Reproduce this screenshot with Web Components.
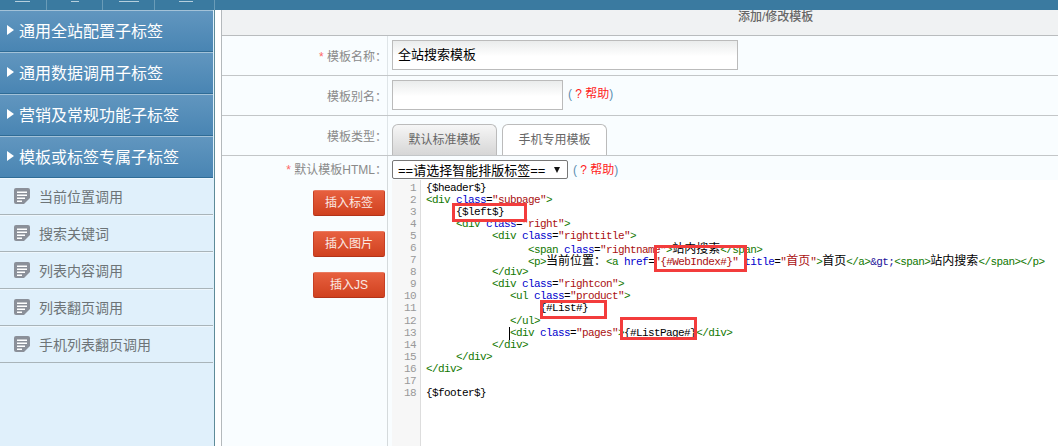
<!DOCTYPE html>
<html lang="zh">
<head>
<meta charset="utf-8">
<title>添加/修改模板</title>
<style>
  html, body { margin: 0; height: 100%; overflow: hidden; background: #fff; }
  body { font-family: "Liberation Sans", "Noto Sans CJK SC", sans-serif; }
</style>
</head>
<body>
<admin-page>
  <top-bar slot="top"></top-bar>
  <side-nav slot="side">
    <nav-head>通用全站配置子标签</nav-head>
    <nav-head>通用数据调用子标签</nav-head>
    <nav-head>营销及常规功能子标签</nav-head>
    <nav-head>模板或标签专属子标签</nav-head>
    <nav-item>当前位置调用</nav-item>
    <nav-item>搜索关键词</nav-item>
    <nav-item>列表内容调用</nav-item>
    <nav-item>列表翻页调用</nav-item>
    <nav-item>手机列表翻页调用</nav-item>
  </side-nav>
  <panel-title>添加/修改模板</panel-title>
  <form-row required label="模板名称：">
    <text-field width="346">全站搜索模板</text-field>
  </form-row>
  <form-row label="模板别名：">
    <text-field width="171"></text-field>
    <help-link></help-link>
  </form-row>
  <form-row label="模板类型：">
    <tab-strip>
      <tab-button>默认标准模板</tab-button>
      <tab-button active>手机专用模板</tab-button>
    </tab-strip>
  </form-row>
  <editor-row>
    <red-button slot="actions">插入标签</red-button>
    <red-button slot="actions">插入图片</red-button>
    <red-button slot="actions">插入JS</red-button>
    <fake-select slot="tools">==请选择智能排版标签==</fake-select>
    <help-link slot="tools"></help-link>
    <code-editor slot="editor">
      <red-mark x="60" y="23" w="75" h="19"></red-mark>
      <red-mark x="262" y="65" w="93" h="27"></red-mark>
      <red-mark x="148" y="120" w="67" h="19"></red-mark>
      <red-mark x="228" y="137" w="77" h="23"></red-mark>
    </code-editor>
  </editor-row>
</admin-page>

<script>
class AdminPage extends HTMLElement {
  constructor() {
    super();
    this.attachShadow({ mode: "open" });
    this.shadowRoot.innerHTML = `
      <style>
        :host { display: flex; flex-direction: column; height: 446px; overflow: hidden; }
        .body { flex: 1; display: flex; min-height: 0; }
        .main {
          flex: 1;
          margin-left: 6px;
          border-left: 1px solid #b4b9bc;
          display: flex;
          flex-direction: column;
          min-width: 0;
        }
      </style>
      <slot name="top"></slot>
      <div class="body">
        <slot name="side"></slot>
        <div class="main"><slot></slot></div>
      </div>`;
  }
}

class TopBar extends HTMLElement {
  constructor() {
    super();
    this.attachShadow({ mode: "open" });
    const cells = [
      [46, 15, 15],
      [55, 24, 8],
      [51, 16, 20],
      [59, 24, 14],
    ];
    this.shadowRoot.innerHTML = `
      <style>
        :host { display: flex; height: 10px; background: #3a7aa0; overflow: hidden; }
        .cell { position: relative; box-sizing: content-box; border-right: 1px solid #6a9cb8; height: 10px; }
        .cell i { display: block; height: 1px; margin-top: 1px; background: #b5cfdd; }
      </style>
      ${cells
        .map(
          ([w, left, len]) =>
            `<div class="cell" style="width:${w}px"><i style="margin-left:${left}px;width:${len}px"></i></div>`
        )
        .join("")}`;
  }
}

class SideNav extends HTMLElement {
  constructor() {
    super();
    this.attachShadow({ mode: "open" });
    this.shadowRoot.innerHTML = `
      <style>
        :host {
          display: flex;
          flex-direction: column;
          box-sizing: border-box;
          width: 215px;
          flex: none;
          background: #e0f0fb;
          border-right: 1px solid #5e8b98;
          padding-right: 1px;
        }
      </style>
      <slot></slot>`;
  }
}

class NavHead extends HTMLElement {
  constructor() {
    super();
    this.attachShadow({ mode: "open" });
    this.shadowRoot.innerHTML = `
      <style>
        :host {
          display: flex;
          align-items: center;
          box-sizing: border-box;
          height: 42px;
          padding: 0 0 2px 7px;
          color: #fff;
          font-size: 16px;
          background: linear-gradient(#6196bf, #4985b3);
          border-top: 1px solid #a3c2d8;
          border-bottom: 1px solid #2f6c96;
        }
        .arrow {
          width: 0;
          height: 0;
          margin: 0 5px 0 0;
          border-left: 7px solid #fff;
          border-top: 5.5px solid transparent;
          border-bottom: 5.5px solid transparent;
        }
      </style>
      <span class="arrow"></span><slot></slot>`;
  }
}

class NavItem extends HTMLElement {
  constructor() {
    super();
    this.attachShadow({ mode: "open" });
    this.shadowRoot.innerHTML = `
      <style>
        :host {
          display: flex;
          align-items: center;
          gap: 9px;
          box-sizing: border-box;
          height: 37px;
          padding-left: 14px;
          color: #6d7477;
          font-size: 14px;
          border-bottom: 1px solid #a9b4b9;
          box-shadow: inset 0 1px 0 #eef7fd;
        }
        svg { flex: none; display: block; }
      </style>
      <svg width="16" height="16" viewBox="0 0 16 16">
        <path fill="#8b9099" d="M2 0H14a2 2 0 0 1 2 2V10L10 16H2a2 2 0 0 1-2-2V2a2 2 0 0 1 2-2z"/>
        <path fill="#fff" d="M3 3.5H13V5H3zM3 6.5H13V8H3zM3 9.5H11V11H3zM3 12.5H8V14H3z"/>
        <path fill="#e0f0fb" d="M16 11.5V16H11z"/>
      </svg>
      <slot></slot>`;
  }
}

class PanelTitle extends HTMLElement {
  constructor() {
    super();
    this.attachShadow({ mode: "open" });
    this.shadowRoot.innerHTML = `
      <style>
        :host {
          display: block;
          box-sizing: border-box;
          height: 26px;
          padding-left: 516px;
          background: #f0f2f3;
          border-bottom: 1px solid #b9bcbe;
          color: #666;
          font-size: 12px;
          font-weight: 500;
          line-height: 15px;
        }
      </style>
      <slot></slot>`;
  }
}

class FormRow extends HTMLElement {
  constructor() {
    super();
    this.attachShadow({ mode: "open" });
  }

  connectedCallback() {
    const star = this.hasAttribute("required") ? '<b>*</b> ' : "";
    this.shadowRoot.innerHTML = `
      <style>
        :host {
          display: flex;
          box-sizing: border-box;
          height: 40px;
          background: #f9fdff;
          border-bottom: 1px solid #c3c6c8;
        }
        .label {
          box-sizing: content-box;
          width: 165px;
          flex: none;
          text-align: right;
          color: #8a8a8a;
          font-size: 12px;
          line-height: 42px;
          border-right: 1px solid #dfe5e8;
        }
        b { color: #f66; font-weight: 400; }
        .value { flex: 1; display: flex; align-items: flex-start; padding-left: 4px; }
      </style>
      <div class="label">${star}${this.getAttribute("label")}</div>
      <div class="value"><slot></slot></div>`;
  }
}

class TextField extends HTMLElement {
  constructor() {
    super();
    this.attachShadow({ mode: "open" });
  }

  connectedCallback() {
    this.shadowRoot.innerHTML = `
      <style>
        :host {
          display: block;
          box-sizing: border-box;
          width: ${this.getAttribute("width")}px;
          height: 30px;
          margin-top: 4px;
          padding-left: 5px;
          border: 1px solid #bbb;
          background: linear-gradient(#eaecec, #fff 55%);
          color: #000;
          font-size: 13px;
          line-height: 28px;
        }
      </style>
      <slot></slot>`;
  }
}

class HelpLink extends HTMLElement {
  constructor() {
    super();
    this.attachShadow({ mode: "open" });
    this.shadowRoot.innerHTML = `
      <style>
        :host {
          display: block;
          margin: 11px 0 0 5px;
          color: #5b8fb0;
          font-size: 12px;
          line-height: 14px;
          white-space: nowrap;
        }
        :host([slot="tools"]) { margin-top: 7px; }
        span { color: #f22; }
      </style>
      ( <span>? 帮助</span>)`;
  }
}

class TabStrip extends HTMLElement {
  constructor() {
    super();
    this.attachShadow({ mode: "open" });
    this.shadowRoot.innerHTML = `
      <style>
        :host { display: flex; gap: 5px; align-self: flex-end; }
      </style>
      <slot></slot>`;
  }
}

class TabButton extends HTMLElement {
  constructor() {
    super();
    this.attachShadow({ mode: "open" });
    this.shadowRoot.innerHTML = `
      <style>
        :host {
          display: block;
          box-sizing: border-box;
          width: 105px;
          height: 31px;
          text-align: center;
          color: #666;
          font-size: 12px;
          line-height: 30px;
          border: 1px solid #bbb;
          border-bottom: 0;
          border-radius: 6px 6px 0 0;
          background: linear-gradient(#f6f6f6, #d6d6d6);
        }
        :host([active]) { background: #fff; }
      </style>
      <slot></slot>`;
  }
}

class EditorRow extends HTMLElement {
  constructor() {
    super();
    this.attachShadow({ mode: "open" });
    this.shadowRoot.innerHTML = `
      <style>
        :host {
          flex: 1;
          display: flex;
          min-height: 0;
          background: #f9fdff;
        }
        .left {
          box-sizing: content-box;
          width: 165px;
          flex: none;
          border-right: 1px solid #d5dadc;
        }
        .label {
          text-align: right;
          color: #8a8a8a;
          font-size: 12px;
          line-height: 29px;
          margin-bottom: 5px;
        }
        b { color: #f66; font-weight: 400; }
        .actions { display: flex; flex-direction: column; gap: 15px; padding-left: 91px; }
        .right { flex: 1; display: flex; flex-direction: column; min-width: 0; }
        .tools { display: flex; height: 24px; padding: 0 0 0 4px; }
      </style>
      <div class="left">
        <div class="label"><b>*</b> 默认模板HTML：</div>
        <div class="actions"><slot name="actions"></slot></div>
      </div>
      <div class="right">
        <div class="tools"><slot name="tools"></slot></div>
        <slot name="editor"></slot>
      </div>`;
  }
}

class RedButton extends HTMLElement {
  constructor() {
    super();
    this.attachShadow({ mode: "open" });
    this.shadowRoot.innerHTML = `
      <style>
        :host {
          display: block;
          box-sizing: border-box;
          width: 72px;
          height: 26px;
          text-align: center;
          color: #fbe9e4;
          font-size: 12px;
          line-height: 25px;
          border: 1px solid #c63f24;
          border-top-color: #ea7a5f;
          border-bottom-color: #b23319;
          border-radius: 2px;
          background: linear-gradient(#e7603f, #d0411f);
        }
      </style>
      <slot></slot>`;
  }
}

class FakeSelect extends HTMLElement {
  constructor() {
    super();
    this.attachShadow({ mode: "open" });
    this.shadowRoot.innerHTML = `
      <style>
        :host {
          display: flex;
          align-items: center;
          box-sizing: border-box;
          width: 176px;
          height: 19px;
          margin-top: 4px;
          padding: 0 7px 0 5px;
          background: #fff;
          border: 1px solid #777;
          border-radius: 2px;
          color: #000;
          font-size: 13px;
          white-space: nowrap;
        }
        .arrow {
          margin-left: auto;
          width: 0;
          height: 0;
          border-top: 6px solid #111;
          border-left: 3px solid transparent;
          border-right: 3px solid transparent;
        }
      </style>
      <slot></slot><span class="arrow"></span>`;
  }
}

const CODE_LINES = [
  '{$header$}',
  '<div class="subpage">',
  '     {$left$}',
  '     <div class="right">',
  '           <div class="righttitle">',
  '                 <span class="rightname">站内搜索</span>',
  '                 <p>当前位置：<a href="{#WebIndex#}" title="首页">首页</a>&gt;<span>站内搜索</span></p>',
  '           </div>',
  '           <div class="rightcon">',
  '              <ul class="product">',
  '                   {#List#}',
  '              </ul>',
  '              <div class="pages">{#ListPage#}</div>',
  '           </div>',
  '     </div>',
  '</div>',
  '',
  '{$footer$}',
];

function escapeHtml(text) {
  return text.replace(/&/g, "&amp;").replace(/</g, "&lt;").replace(/>/g, "&gt;");
}

// rough html colouring, enough for the lines above
function highlight(line) {
  const html = line.replace(
    /(&gt;)|(<\/?[a-z]+|>)|([a-z]+)=("[^"]*")|([^<>&]+?(?=<|>|&gt;|[a-z]+=|$))/g,
    (all, entity, tag, attr, val) => {
      if (entity) return `<span class="en">${escapeHtml(entity)}</span>`;
      if (tag) return `<span class="tag">${escapeHtml(tag)}</span>`;
      if (attr) return `<span class="attr">${attr}</span>=<span class="val">${val}</span>`;
      return escapeHtml(all);
    }
  );
  return html.replace(/[\u4e00-\u9fff：]+/g, '<span class="cjk">$&</span>');
}

class CodeEditor extends HTMLElement {
  constructor() {
    super();
    this.attachShadow({ mode: "open" });
    this.shadowRoot.innerHTML = `
      <style>
        :host {
          position: relative;
          flex: 1;
          display: flex;
          margin-left: 4px;
          background: #fff;
          min-height: 0;
        }
        .gutter {
          box-sizing: content-box;
          width: 24px;
          padding: 2px 4px 0 0;
          background: #f7f7f7;
          border-right: 1px solid #ddd;
          color: #999;
          font: 11px/12.06px "Liberation Mono", monospace;
          letter-spacing: -0.6px;
          text-align: right;
        }
        .code {
          position: relative;
          flex: 1;
          padding: 2px 0 0 5px;
          color: #000;
          font: 11px/12.06px "Liberation Mono", "Noto Sans CJK SC", monospace;
          letter-spacing: -0.6px;
          white-space: pre;
          overflow: hidden;
        }
        .line { height: 12.06px; }
        .tag { color: #170; }
        .attr { color: #00c; }
        .val { color: #a11; }
        .en { color: #219; }
        .cjk { font: 12px/12px "Noto Sans CJK SC", sans-serif; letter-spacing: 0; }
        .caret {
          position: absolute;
          left: 88px;
          top: 147px;
          width: 1px;
          height: 13px;
          background: #000;
        }
      </style>
      <div class="gutter">${CODE_LINES.map((_, i) => `<div class="line">${i + 1}</div>`).join("")}</div>
      <div class="code">${CODE_LINES.map((l) => `<div class="line">${highlight(l)}</div>`).join("")}<i class="caret"></i></div>
      <slot></slot>`;
  }
}

class RedMark extends HTMLElement {
  constructor() {
    super();
    this.attachShadow({ mode: "open" });
    this.shadowRoot.innerHTML = `
      <style>
        :host {
          position: absolute;
          box-sizing: border-box;
          border: 3px solid #f33c3c;
        }
      </style>`;
  }

  connectedCallback() {
    this.style.left = this.getAttribute("x") + "px";
    this.style.top = this.getAttribute("y") + "px";
    this.style.width = this.getAttribute("w") + "px";
    this.style.height = this.getAttribute("h") + "px";
  }
}

customElements.define("admin-page", AdminPage);
customElements.define("top-bar", TopBar);
customElements.define("side-nav", SideNav);
customElements.define("nav-head", NavHead);
customElements.define("nav-item", NavItem);
customElements.define("panel-title", PanelTitle);
customElements.define("form-row", FormRow);
customElements.define("text-field", TextField);
customElements.define("help-link", HelpLink);
customElements.define("tab-strip", TabStrip);
customElements.define("tab-button", TabButton);
customElements.define("editor-row", EditorRow);
customElements.define("red-button", RedButton);
customElements.define("fake-select", FakeSelect);
customElements.define("code-editor", CodeEditor);
customElements.define("red-mark", RedMark);
</script>
</body>
</html>
